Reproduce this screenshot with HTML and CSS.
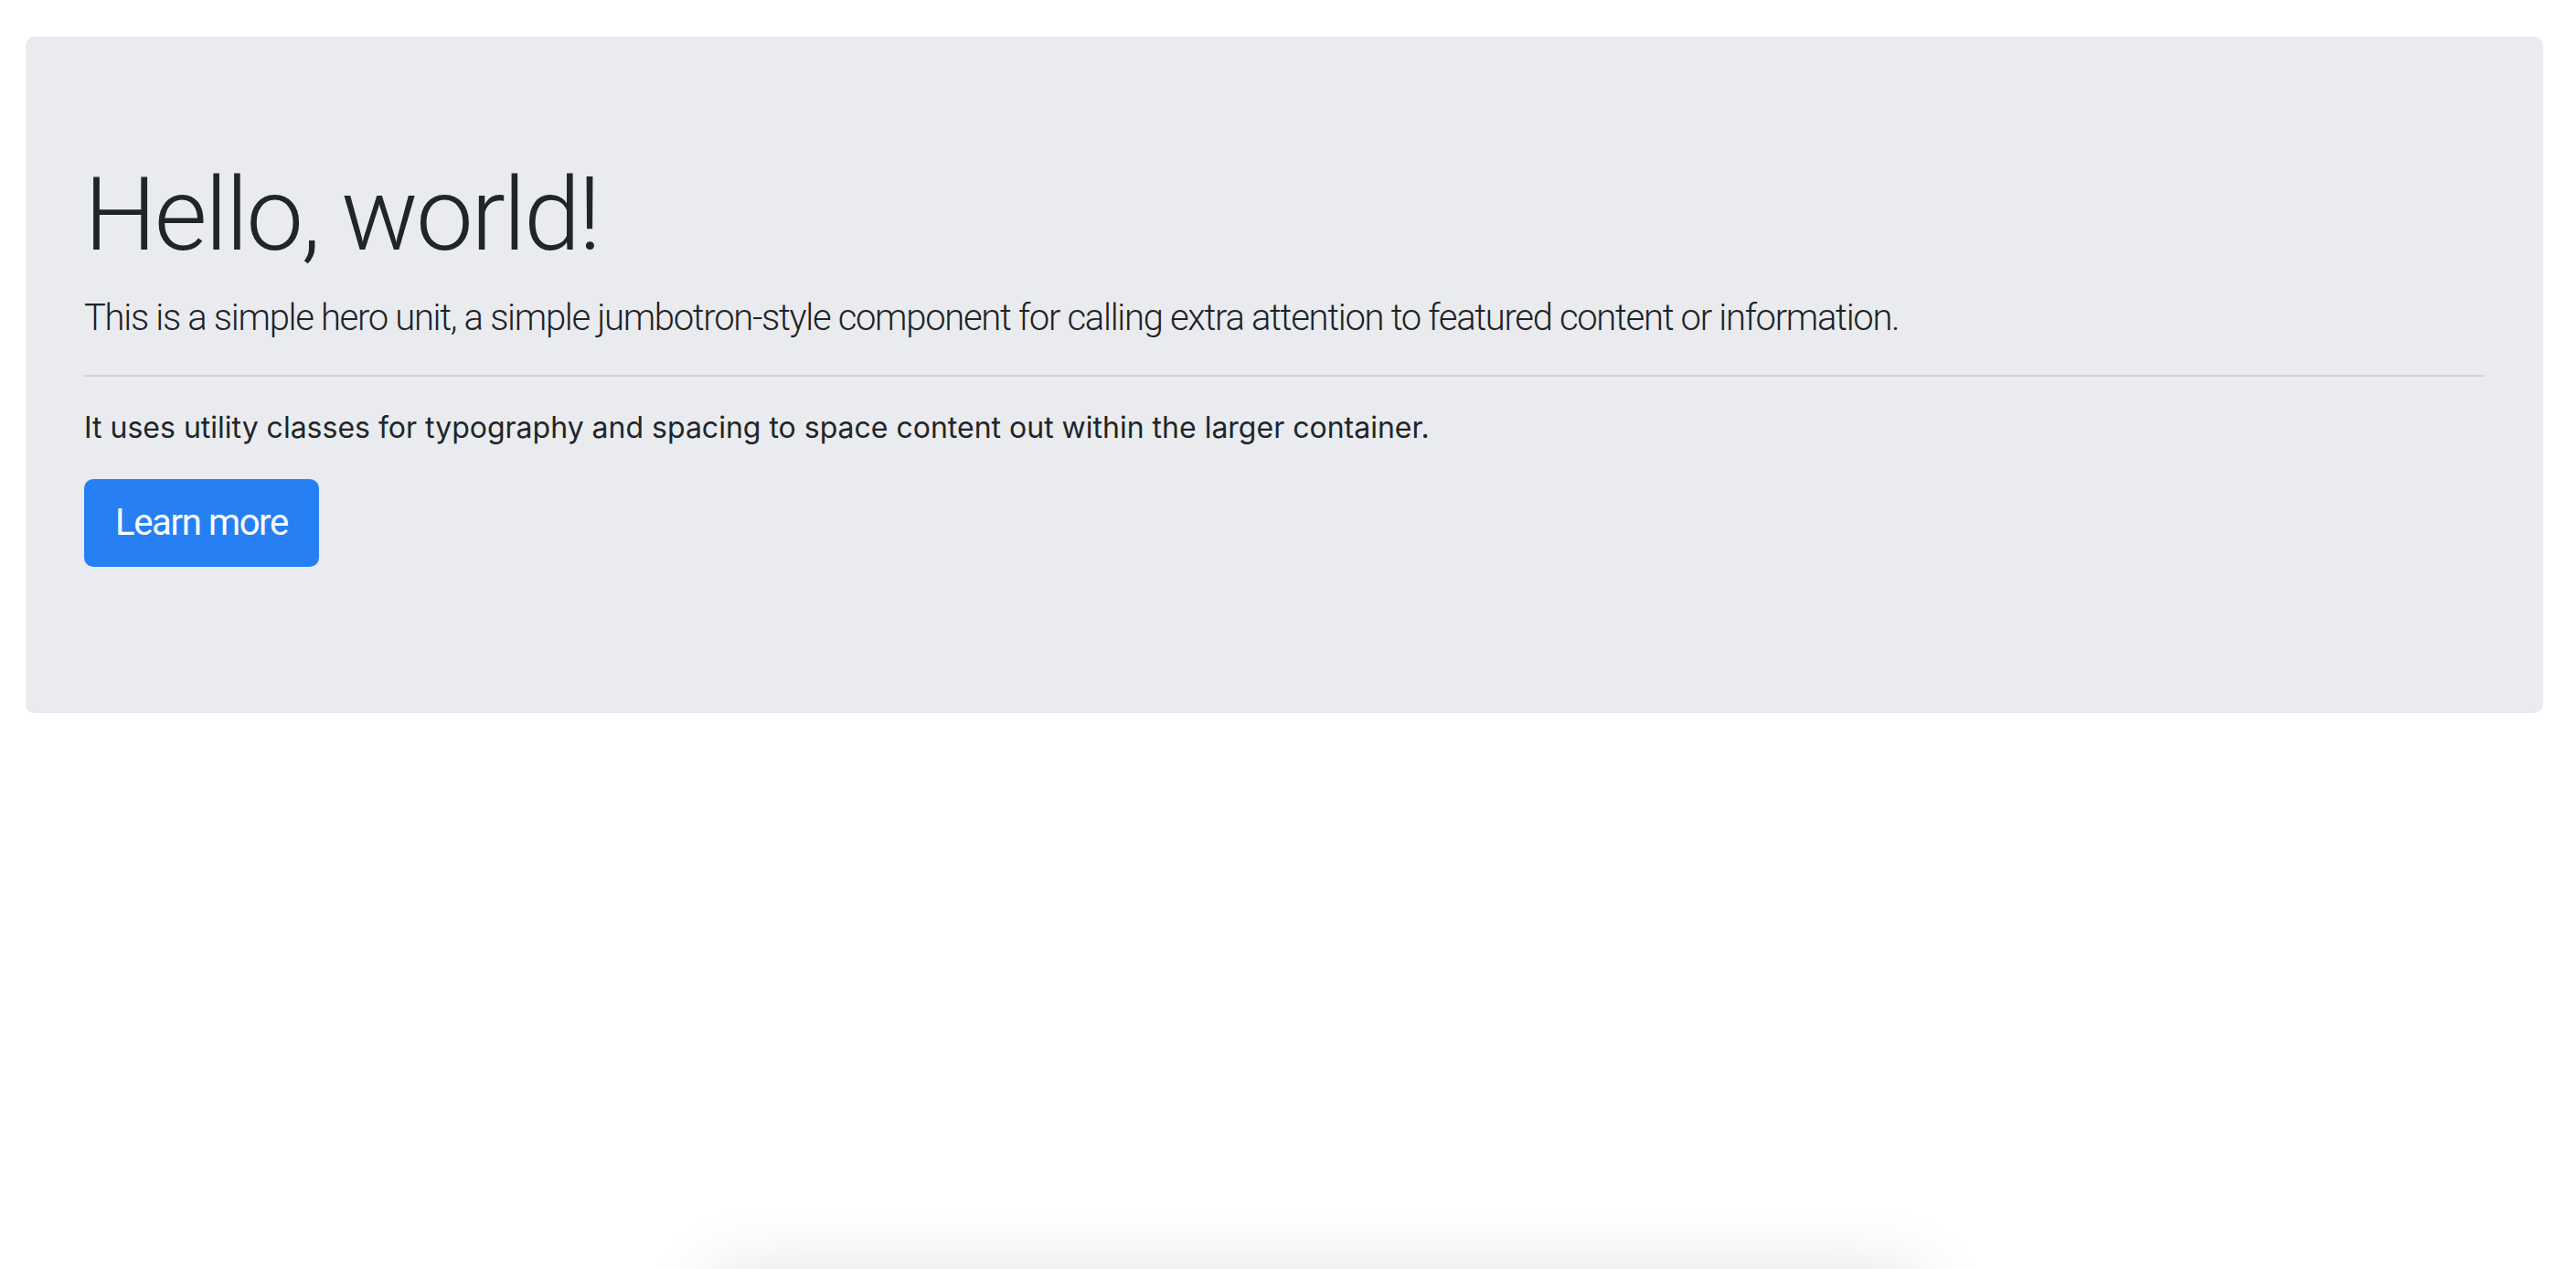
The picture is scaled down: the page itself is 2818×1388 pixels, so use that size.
FILE: index.html
```html
<!DOCTYPE html>
<html lang="en">
<head>
<meta charset="utf-8">
<title>Jumbotron</title>
<link rel="stylesheet" href="styles.css">
</head>
<body>
  <main class="page">
    <section class="jumbotron">
      <h1 class="display">Hello, world!</h1>
      <p class="lead">This is a simple hero unit, a simple jumbotron-style component for calling extra attention to featured content or information.</p>
      <hr class="rule">
      <p class="text">It uses utility classes for typography and spacing to space content out within the larger container.</p>
      <p class="lead action"><a class="btn" href="#" role="button">Learn more</a></p>
    </section>
    <div class="below-card"></div>
  </main>
</body>
</html>
```
FILE: styles.css
```css
html, body {
  margin: 0;
  padding: 0;
  background: #ffffff;
  overflow: hidden;
}

body {
  font-family: Inter, "Liberation Sans", sans-serif;
  color: #212529;
}

.page {
  display: flex;
  flex-direction: column;
  padding: 40px 36px 0 28px;
}

.jumbotron {
  background: #e9ebef;
  border-radius: 10px;
  padding: 128px 64px;
  margin-bottom: 64px;
}

.display {
  margin: 0 0 16px;
  font-family: Roboto, Inter, sans-serif;
  font-size: 112px;
  line-height: 134.4px;
  font-weight: 300;
  letter-spacing: -0.023em;
}

.lead {
  margin: 0 0 32px;
  font-family: Roboto, Inter, sans-serif;
  font-size: 40px;
  line-height: 60px;
  font-weight: 300;
  letter-spacing: -0.033em;
  color: #1f2226;
}

.rule {
  margin: 32px 0;
  border: 0;
  border-top: 2px solid rgba(0, 0, 0, 0.1);
  height: 0;
}

.text {
  margin: 0 0 32px;
  font-size: 32px;
  line-height: 48px;
  font-weight: 400;
  letter-spacing: 0;
}

.action {
  display: flex;
}

.btn {
  display: inline-block;
  padding: 16px 32px;
  border: 2px solid #2680f4;
  background: #2680f4;
  color: #ffffff;
  font-family: Roboto, Inter, sans-serif;
  font-size: 40px;
  line-height: 60px;
  font-weight: 400;
  letter-spacing: -0.034em;
  border-radius: 10px;
  text-decoration: none;
}

.below-card {
  margin-top: 548px;
  margin-left: 752px;
  width: 1320px;
  height: 200px;
  background: #ffffff;
  box-shadow: 0 0 80px rgba(0, 0, 0, 0.12);
}
```
